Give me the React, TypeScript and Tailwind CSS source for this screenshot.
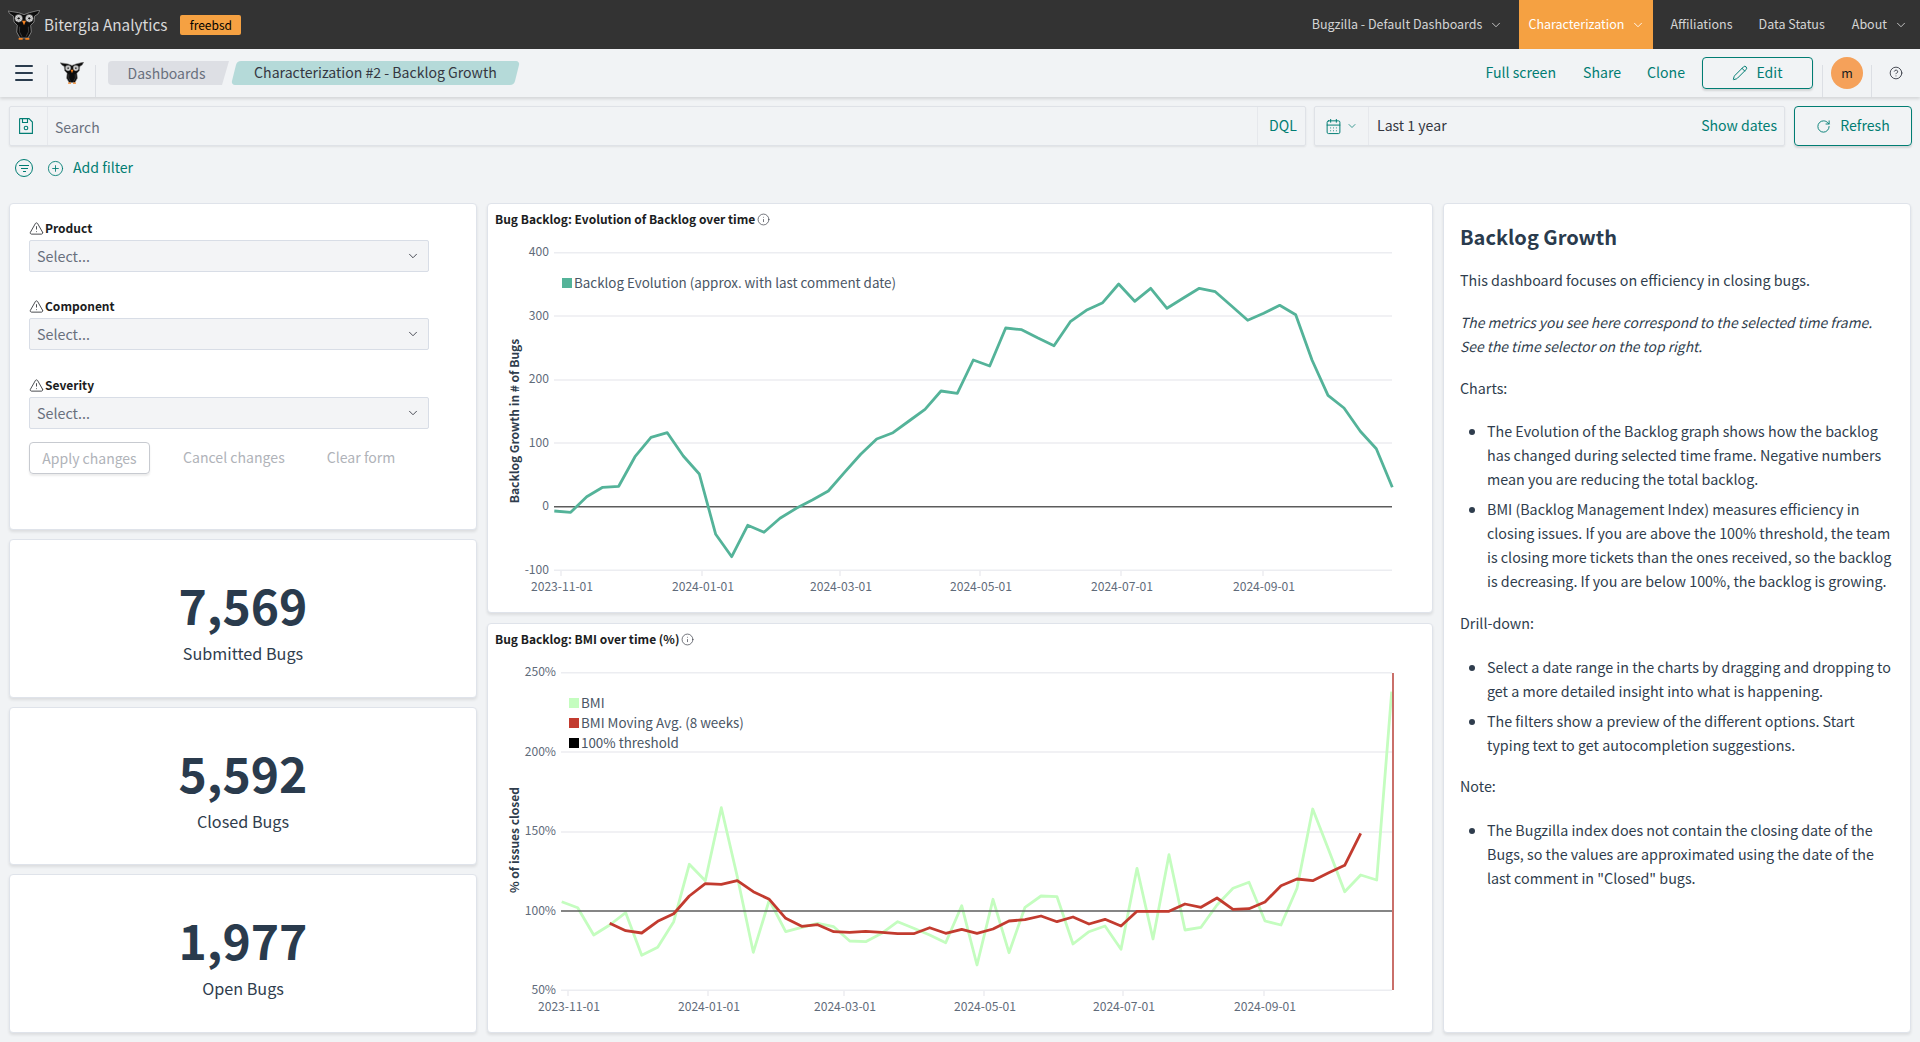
import { ChevronDown, CalendarDays, Pencil, RotateCw, CirclePlus, HelpCircle, TriangleAlert, Info, Menu } from 'lucide-react'

// chart points are read off the zoomed crops: 3 units per pixel, right half offset by 1425
const R = 1425
const backlog: number[][] = [
  [208, 933], [257, 937], [305, 890], [353, 862], [401, 859], [450, 770], [498, 712], [547, 698], [595, 768], [643, 822],
  [692, 1003], [740, 1070], [788, 976], [837, 997], [885, 955], [934, 925], [982, 900], [1030, 873], [1078, 818], [1127, 763],
  [1175, 717], [1224, 698], [1272, 663], [1320, 628], [1368, 573], [1417, 580],
  [R + 40, 480], [R + 89, 498], [R + 137, 384], [R + 185, 389], [R + 234, 414], [R + 282, 437], [R + 331, 365], [R + 379, 331],
  [R + 428, 308], [R + 476, 252], [R + 524, 304], [R + 572, 265], [R + 621, 325], [R + 669, 295], [R + 718, 265], [R + 766, 275],
  [R + 814, 317], [R + 863, 361], [R + 911, 340], [R + 959, 316], [R + 1007, 344], [R + 1056, 480], [R + 1104, 586], [R + 1152, 624],
  [R + 1201, 694], [R + 1249, 746], [R + 1297, 862],
]
const bmi: number[][] = [
  [230, 845], [278, 863], [326, 945], [374, 915], [422, 878], [470, 1006], [518, 982], [566, 905], [613, 733], [661, 782],
  [709, 563], [757, 770], [805, 997], [853, 840], [902, 935], [950, 922], [998, 910], [1046, 920], [1094, 963], [1142, 965],
  [1190, 940], [1238, 905], [1286, 925], [1334, 945], [1382, 968], [1430, 857],
  [R + 51, 1035], [R + 99, 838], [R + 147, 998], [R + 195, 862], [R + 243, 828], [R + 291, 830], [R + 339, 972], [R + 387, 935],
  [R + 435, 918], [R + 483, 988], [R + 531, 745], [R + 579, 957], [R + 627, 704], [R + 675, 930], [R + 723, 922], [R + 771, 855],
  [R + 819, 805], [R + 867, 787], [R + 915, 903], [R + 963, 915], [R + 1011, 805], [R + 1058, 567], [R + 1106, 690], [R + 1154, 815],
  [R + 1202, 765], [R + 1250, 780], [R + 1295, 215],
]
const bmiAvg: number[][] = [
  [374, 910], [422, 932], [470, 939], [518, 904], [566, 881], [613, 828], [661, 791], [709, 793], [757, 782], [805, 815],
  [853, 838], [902, 895], [950, 919], [998, 914], [1046, 935], [1094, 937], [1142, 934], [1190, 937], [1238, 941], [1286, 941],
  [1334, 923], [1382, 940], [1430, 928],
  [R + 51, 940], [R + 99, 927], [R + 147, 903], [R + 195, 899], [R + 243, 888], [R + 291, 905], [R + 339, 891], [R + 387, 912],
  [R + 435, 898], [R + 483, 918], [R + 531, 874], [R + 579, 874], [R + 627, 874], [R + 675, 852], [R + 723, 862], [R + 771, 834],
  [R + 819, 868], [R + 867, 866], [R + 915, 846], [R + 963, 797], [R + 1011, 777], [R + 1058, 782], [R + 1106, 758], [R + 1154, 736],
  [R + 1202, 640],
]

const toPoints = (pts: number[][]) => pts.map(([x, y]) => `${(x / 3).toFixed(1)},${(y / 3).toFixed(1)}`).join(' ')

const Owl = ({ className }: { className: string }) => (
  <svg viewBox="0 0 96 90" className={className}>
    <path d="M0 3 L32 8 L48 14 L64 8 L96 0 L90 12 L80 18 L78 36 L68 46 L70 66 L60 84 L36 84 L26 66 L28 46 L18 36 L16 18 L6 12 Z" fill="#0d0d0d" stroke="#8a8a8a" strokeWidth="2.5" />
    <circle cx="32" cy="25" r="11.5" fill="#eeeeee" stroke="#444" strokeWidth="2" />
    <circle cx="64" cy="25" r="11.5" fill="#eeeeee" stroke="#444" strokeWidth="2" />
    <circle cx="32" cy="25" r="7" fill="none" stroke="#777" strokeWidth="1.5" />
    <circle cx="64" cy="25" r="7" fill="none" stroke="#777" strokeWidth="1.5" />
    <circle cx="32" cy="25" r="3.5" fill="#111" />
    <circle cx="64" cy="25" r="3.5" fill="#111" />
    <path d="M42 32 L54 32 L48 46 Z" fill="#f58220" />
    <path d="M35 50 Q30 66 42 80 M61 50 Q66 66 54 80" fill="none" stroke="#555" strokeWidth="2" />
    <path d="M32 84 H44 V89 H32 Z M52 84 H64 V89 H52 Z" fill="#f58220" />
  </svg>
)

const NavItem = ({ label, chevron, active, className }: { label: string; chevron?: boolean; active?: boolean; className: string }) => (
  <div className={`flex h-full items-center ${active ? 'bg-[#f5a142] text-white' : 'text-[#d4d4d4]'} ${className}`}>
    <span>{label}</span>
    {chevron && <ChevronDown className="ml-[7px] h-[14px] w-[14px]" strokeWidth={1.5} />}
  </div>
)

const FilterSelect = ({ label, className }: { label: string; className: string }) => (
  <div className={className}>
    <div className="flex h-[20px] items-center text-[12px] leading-[20px] font-bold text-[#1a1c21]">
      <TriangleAlert className="mr-[1px] h-[15px] w-[15px]" strokeWidth={1.25} />
      {label}
    </div>
    <div className="mt-[2px] flex h-[32px] w-[400px] items-center justify-between rounded-[2px] border border-[#d8dde6] bg-[#f3f4f6] pr-[8px] pl-[7px] text-[14.3px] text-[#69707d]">
      Select...
      <ChevronDown className="h-[14px] w-[14px] text-[#343741]" strokeWidth={1.5} />
    </div>
  </div>
)

const Stat = ({ value, label }: { value: string; label: string }) => (
  <div className="flex flex-1 flex-col items-center justify-center rounded-[4px] border border-[#dfe3ea] bg-white shadow-[0_2px_3px_rgba(0,0,0,0.09)]">
    <div className="text-[48px] leading-[69px] font-bold text-[#2a3b4d]">{value}</div>
    <div className="text-[16.2px] leading-[28px] text-[#2f3d4d]">{label}</div>
  </div>
)

const ChartPanel = ({ title, className, children }: { title: string; className: string; children: React.ReactNode }) => (
  <div className={`rounded-[4px] border border-[#dfe3ea] bg-white shadow-[0_2px_3px_rgba(0,0,0,0.09)] ${className}`}>
    <div className="flex h-[30px] items-center pl-[7px] text-[12px] font-bold text-[#1a1c21]">
      {title}
      <Info className="ml-[2px] h-[13px] w-[13px] text-[#343741]" strokeWidth={1.25} />
    </div>
    {children}
  </div>
)

const BacklogChart = () => {
  const grid = [158, 348, 540, 729, 1111]
  const yLabels: [string, number][] = [['400', 155], ['300', 347], ['200', 537], ['100', 728], ['0', 918], ['-100', 1108]]
  const ticks: [string, number][] = [['2023-11-01', 228], ['2024-01-01', 651], ['2024-03-01', 1065], ['2024-05-01', 1485], ['2024-07-01', 1908], ['2024-09-01', 2334]]
  return (
    <svg viewBox="3 34 944 377" className="block h-[377px] w-[944px]">
      {grid.map((y) => (
        <line key={y} x1={69} x2={907} y1={y / 3} y2={y / 3} stroke="#ecedf1" strokeWidth="1.5" />
      ))}
      <line x1={69} x2={907} y1={920 / 3} y2={920 / 3} stroke="#5c5c5c" strokeWidth="1.5" />
      {ticks.map(([t, x]) => (
        <g key={t}>
          <line x1={x / 3} x2={x / 3} y1={370} y2={376} stroke="#ecedf1" strokeWidth="1.5" />
          <text x={x / 3 + 1} y={391} textAnchor="middle" fontSize="12.1" fill="#5f6b7a">{t}</text>
        </g>
      ))}
      {yLabels.map(([t, y]) => (
        <text key={t} x={64} y={y / 3 + 4.3} textAnchor="end" fontSize="12.1" fill="#5f6b7a">{t}</text>
      ))}
      <text transform="translate(34 221) rotate(-90)" textAnchor="middle" fontSize="12" fontWeight="700" fill="#2f3d4d">Backlog Growth in # of Bugs</text>
      <rect x={77} y={78} width={10} height={10} fill="#54b399" />
      <text x={89} y={87.5} fontSize="13.4" fill="#4a5665">Backlog Evolution (approx. with last comment date)</text>
      <polyline points={toPoints(backlog)} fill="none" stroke="#54b399" strokeWidth="2.8" strokeLinejoin="round" />
    </svg>
  )
}

const BmiChart = () => {
  const grid = [158, 396, 636, 1111]
  const yLabels: [string, number][] = [['250%', 155], ['200%', 394], ['150%', 632], ['100%', 871], ['50%', 1108]]
  const ticks: [string, number][] = [['2023-11-01', 249], ['2024-01-01', 669], ['2024-03-01', 1077], ['2024-05-01', 1497], ['2024-07-01', 1914], ['2024-09-01', 2337]]
  const legend: [string, string, number][] = [['BMI', '#c4fdbf', 78], ['BMI Moving Avg. (8 weeks)', '#c23b2f', 98], ['100% threshold', '#000000', 118]]
  return (
    <svg viewBox="3 34 944 378" className="block h-[378px] w-[944px]">
      {grid.map((y) => (
        <line key={y} x1={76} x2={907} y1={y / 3} y2={y / 3} stroke="#ecedf1" strokeWidth="1.5" />
      ))}
      {ticks.map(([t, x]) => (
        <g key={t}>
          <line x1={x / 3} x2={x / 3} y1={370} y2={376} stroke="#ecedf1" strokeWidth="1.5" />
          <text x={x / 3 + 1} y={391} textAnchor="middle" fontSize="12.1" fill="#5f6b7a">{t}</text>
        </g>
      ))}
      {yLabels.map(([t, y]) => (
        <text key={t} x={71} y={y / 3 + 4.3} textAnchor="end" fontSize="12.1" fill="#5f6b7a">{t}</text>
      ))}
      <text transform="translate(34 220) rotate(-90)" textAnchor="middle" fontSize="12" fontWeight="700" fill="#2f3d4d">% of issues closed</text>
      {legend.map(([t, c, y]) => (
        <g key={t}>
          <rect x={84} y={y} width={10} height={10} fill={c} />
          <text x={96} y={y + 9.5} fontSize="13.4" fill="#4a5665">{t}</text>
        </g>
      ))}
      <polyline points={toPoints(bmi)} fill="none" stroke="#c4fdbf" strokeWidth="2.8" strokeLinejoin="round" />
      <line x1={76} x2={907} y1={873 / 3} y2={873 / 3} stroke="#5c5c5c" strokeWidth="1.5" />
      <polyline points={toPoints(bmiAvg)} fill="none" stroke="#c23b2f" strokeWidth="2.8" strokeLinejoin="round" />
      <line x1={908} x2={908} y1={53} y2={370} stroke="#c4605a" strokeWidth="1.8" />
    </svg>
  )
}

const Li = ({ children }: { children: React.ReactNode }) => (
  <li className="mb-[6px] marker:text-[#2f3d4d]">{children}</li>
)

export default function App() {
  return (
    <div className="h-[1042px] w-[1920px] overflow-hidden bg-[#f1f3f5] font-['Noto_Sans_CJK_SC',sans-serif] text-[#343741]">
      {/* Top nav */}
      <header className="flex h-[49px] items-center bg-[#333333]">
        <Owl className="ml-[8px] h-[30px] w-[32px]" />
        <span className="ml-[4px] text-[15.3px] text-[#d9d9d9]">Bitergia Analytics</span>
        <span className="ml-[13px] flex h-[20px] w-[61px] items-center justify-center rounded-[2px] bg-[#f5a142] text-[12px] text-black">freebsd</span>
        <nav className="ml-auto flex h-full text-[12.5px]">
          <NavItem label="Bugzilla - Default Dashboards" chevron className="pr-[16px]" />
          <NavItem label="Characterization" chevron active className="w-[134px] pl-[9px]" />
          <NavItem label="Affiliations" className="ml-[17px]" />
          <NavItem label="Data Status" className="ml-[26px]" />
          <NavItem label="About" chevron className="ml-[27px] pr-[12px]" />
        </nav>
      </header>

      {/* Breadcrumb bar */}
      <div className="relative flex h-[48px] items-center bg-[#f1f3f5] shadow-[0_2px_3px_rgba(0,0,0,0.12)]">
        <div className="relative flex h-full w-[48px] items-center justify-center after:absolute after:right-0 after:bottom-0 after:h-[32px] after:w-px after:bg-[#dcdfe4]">
          <Menu className="h-[24px] w-[24px] text-[#2a3b4d]" strokeWidth={2} />
        </div>
        <div className="relative flex h-full w-[48px] items-center justify-center after:absolute after:right-0 after:bottom-0 after:h-[32px] after:w-px after:bg-[#dcdfe4]">
          <Owl className="h-[22px] w-[24px]" />
        </div>
        <div className="ml-[12px] flex h-[24px] items-center text-[14.1px]">
          <div className="flex h-full w-[121px] items-center justify-center rounded-l-[4px] bg-[#dddfe4] pr-[4px] text-[14px] text-[#69707d] [clip-path:polygon(0_0,100%_0,calc(100%-7px)_100%,0_100%)]">Dashboards</div>
          <div className="ml-[5px] flex h-full w-[283px] -skew-x-[14deg] items-center justify-center rounded-[4px] bg-[#b5dad9] text-[#343741]">
            <span className="skew-x-[14deg]">Characterization #2 - Backlog Growth</span>
          </div>
        </div>
        <div className="ml-auto flex h-full items-center text-[14.1px] text-[#017d73]">
          <span>Full screen</span>
          <span className="ml-[27px]">Share</span>
          <span className="ml-[26px]">Clone</span>
          <div className="ml-[17px] flex h-[32px] w-[111px] items-center justify-center gap-[8px] rounded-[4px] border border-[#017d73] shadow-[0_2px_2px_rgba(0,0,0,0.12)]">
            <Pencil className="h-[16px] w-[16px]" strokeWidth={1.5} />
            Edit
          </div>
          <div className="relative ml-[9px] flex h-full w-[50px] items-center justify-center before:absolute before:bottom-0 before:left-0 before:h-[32px] before:w-px before:bg-[#dcdfe4] after:absolute after:right-0 after:bottom-0 after:h-[32px] after:w-px after:bg-[#dcdfe4]">
            <div className="flex h-[32px] w-[32px] items-center justify-center rounded-full bg-[#f5a15a] text-[12.5px] text-[#1a1c21]">m</div>
          </div>
          <div className="flex h-full w-[48px] items-center justify-center">
            <HelpCircle className="h-[14px] w-[14px] text-[#343741]" strokeWidth={1.5} />
          </div>
        </div>
      </div>

      {/* Query bar */}
      <div className="mt-[9px] flex h-[40px] pl-[9px] text-[14.1px]">
        <div className="flex w-[1297px] rounded-[2px] border border-[#dfe2e7] shadow-[0_1px_2px_rgba(0,0,0,0.08)]">
          <div className="flex w-[38px] items-center justify-center border-r border-[#e6e8ec] pr-[6px]">
            <svg viewBox="0 0 14 16" className="h-[16px] w-[14px]" fill="none" stroke="#017d73" strokeWidth="1.1">
              <path d="M1 .6 H10 L13.4 4 V15.4 H.6 V1 Z" />
              <path d="M3.5 .6 V4.5 H8.5 V.6" />
              <circle cx="7" cy="10" r="1.8" />
            </svg>
          </div>
          <span className="ml-[7px] self-center pt-[2px] text-[14px] text-[#69707d]">Search</span>
          <div className="ml-auto flex w-[48px] items-center justify-center border-l border-[#e6e8ec] pl-[3px] text-[#017d73]">DQL</div>
        </div>
        <div className="ml-[8px] flex w-[471px] items-center rounded-[2px] border border-[#dfe2e7] shadow-[0_1px_2px_rgba(0,0,0,0.08)]">
          <div className="flex h-full w-[54px] items-center justify-center gap-[4px] border-r border-[#e6e8ec] text-[#017d73]">
            <CalendarDays className="h-[17px] w-[17px]" strokeWidth={1.4} />
            <ChevronDown className="h-[12px] w-[12px]" strokeWidth={1.5} />
          </div>
          <span className="ml-[8px] pb-[1px]">Last 1 year</span>
          <span className="mr-[7px] ml-auto pb-[1px] text-[#017d73]">Show dates</span>
        </div>
        <div className="ml-[9px] flex w-[118px] items-center justify-center gap-[9px] rounded-[4px] border border-[#017d73] text-[#017d73] shadow-[0_2px_2px_rgba(0,0,0,0.12)]">
          <RotateCw className="h-[15px] w-[15px]" strokeWidth={1.5} />
          Refresh
        </div>
      </div>

      {/* Filter row */}
      <div className="mt-[10px] flex h-[24px] items-center pl-[15px] text-[14.1px] text-[#017d73]">
        <div className="flex h-[18px] w-[18px] flex-col items-center justify-center gap-[2px] rounded-full border border-[#017d73]">
          <span className="h-[1px] w-[10px] bg-[#017d73]" />
          <span className="h-[1px] w-[7px] bg-[#017d73]" />
          <span className="h-[1px] w-[3px] bg-[#017d73]" />
        </div>
        <CirclePlus className="ml-[14px] h-[17px] w-[17px]" strokeWidth={1.25} />
        <span className="ml-[9px]">Add filter</span>
      </div>

      {/* Dashboard grid */}
      <div className="mt-[23px] flex gap-[10px] pl-[9px]">
        <div className="flex h-[830px] w-[468px] flex-col gap-[9px]">
          <div className="h-[327px] rounded-[4px] border border-[#dfe3ea] bg-white pt-[14px] pl-[19px] shadow-[0_2px_3px_rgba(0,0,0,0.09)]">
            <FilterSelect label="Product" className="" />
            <FilterSelect label="Component" className="mt-[24px]" />
            <FilterSelect label="Severity" className="mt-[25px]" />
            <div className="mt-[13px] flex items-center text-[14.1px] text-[#b0b3b9]">
              <span className="flex h-[32px] w-[121px] items-center justify-center rounded-[4px] border border-[#c7cad0] text-[14px] shadow-[0_2px_2px_rgba(0,0,0,0.08)]">Apply changes</span>
              <span className="ml-[33px]">Cancel changes</span>
              <span className="ml-[42px]">Clear form</span>
            </div>
          </div>
          <Stat value="7,569" label="Submitted Bugs" />
          <Stat value="5,592" label="Closed Bugs" />
          <Stat value="1,977" label="Open Bugs" />
        </div>

        <div className="flex w-[946px] flex-col gap-[10px]">
          <ChartPanel title="Bug Backlog: Evolution of Backlog over time" className="h-[410px]">
            <BacklogChart />
          </ChartPanel>
          <ChartPanel title="Bug Backlog: BMI over time (%)" className="h-[410px]">
            <BmiChart />
          </ChartPanel>
        </div>

        <div className="h-[830px] w-[468px] rounded-[4px] border border-[#dfe3ea] bg-white pt-[17px] pr-[16px] pl-[16px] text-[14.3px] leading-[24px] text-[#2f3d4d] shadow-[0_2px_3px_rgba(0,0,0,0.09)]">
          <h2 className="mb-[15px] text-[20px] leading-[32px] font-semibold text-[#2a3b4d]">Backlog Growth</h2>
          <p className="mb-[18px]">This dashboard focuses on efficiency in closing bugs.</p>
          <p className="mb-[18px] text-[13.85px] italic">The metrics you see here correspond to the selected time frame.<br />See the time selector on the top right.</p>
          <p className="mb-[19px]">Charts:</p>
          <ul className="mb-[18px] list-disc pl-[27px]">
            <Li>The Evolution of the Backlog graph shows how the backlog has changed during selected time frame. Negative numbers mean you are reducing the total backlog.</Li>
            <Li>BMI (Backlog Management Index) measures efficiency in closing issues. If you are above the 100% threshold, the team is closing more tickets than the ones received, so the backlog is decreasing. If you are below 100%, the backlog is growing.</Li>
          </ul>
          <p className="mb-[20px]">Drill-down:</p>
          <ul className="mb-[17px] list-disc pl-[27px]">
            <Li>Select a date range in the charts by dragging and dropping to get a more detailed insight into what is happening.</Li>
            <Li>The filters show a preview of the different options. Start typing text to get autocompletion suggestions.</Li>
          </ul>
          <p className="mb-[20px]">Note:</p>
          <ul className="list-disc pl-[27px]">
            <Li>The Bugzilla index does not contain the closing date of the Bugs, so the values are approximated using the date of the last comment in "Closed" bugs.</Li>
          </ul>
        </div>
      </div>
    </div>
  )
}
